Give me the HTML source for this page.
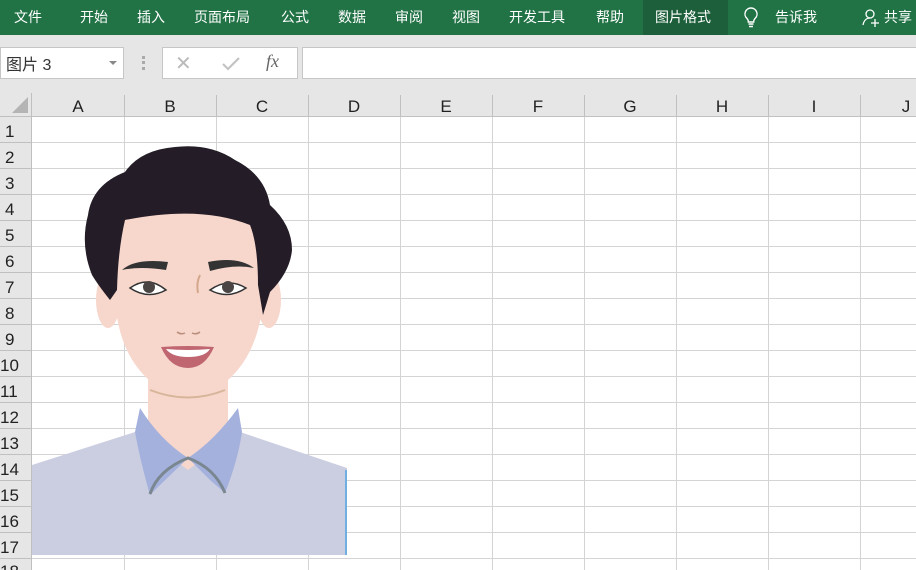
<!DOCTYPE html>
<html><head><meta charset="utf-8"><style>
*{margin:0;padding:0;box-sizing:border-box}
body{width:916px;height:570px;overflow:hidden;background:#fff;font-family:"Liberation Sans","Noto Sans CJK SC",sans-serif;position:relative}
.rib{position:absolute;left:0;top:0;width:916px;height:35px;background:#217346;color:#fff;font-size:14px}
.rib span{position:absolute;top:7px}
.act{position:absolute;left:643px;top:0;width:85px;height:35px;background:#1d5f3a}
.band{position:absolute;left:0;top:35px;width:916px;height:58px;background:#e6e6e6}
.nb{position:absolute;left:0;top:47px;width:124px;height:32px;background:#fff;border:1px solid #c6c6c6;font-size:16px;color:#333;padding:3px 5px}
.fb1{position:absolute;left:162px;top:47px;width:136px;height:32px;background:#fff;border:1px solid #c6c6c6}
.fb2{position:absolute;left:302px;top:47px;width:620px;height:32px;background:#fff;border:1px solid #c6c6c6}
</style></head><body>
<div class="rib"><div class="act"></div>
<span style="left:14px">文件</span><span style="left:80px">开始</span><span style="left:137px">插入</span><span style="left:194px">页面布局</span><span style="left:281px">公式</span><span style="left:338px">数据</span><span style="left:395px">审阅</span><span style="left:452px">视图</span><span style="left:509px">开发工具</span><span style="left:596px">帮助</span><span style="left:655px">图片格式</span><span style="left:775px">告诉我</span><span style="left:884px">共享</span>
<svg style="position:absolute;left:742px;top:6px" width="18" height="22"><path d="M9 2a6 6 0 0 0-4 10.5c1 1 1.3 2 1.3 3.5h5.4c0-1.5.3-2.5 1.3-3.5A6 6 0 0 0 9 2zM6.5 18h5M7 20.5h4" stroke="#fff" stroke-width="1.4" fill="none"/></svg>
<svg style="position:absolute;left:862px;top:8px" width="20" height="20"><circle cx="8" cy="6" r="4" stroke="#fff" fill="none" stroke-width="1.3"/><path d="M1 17c1-5 4-7 7-7M13 11v8M9 15h8" stroke="#fff" fill="none" stroke-width="1.3"/></svg>
</div>
<div class="band"></div>
<div class="nb">图片 3<span style="position:absolute;right:6px;top:13px;border:4px solid transparent;border-top:4px solid #888"></span></div>
<div style="position:absolute;left:142px;top:56px;width:3px;height:14px;border-left:3px dotted #aaa"></div>
<div class="fb1"><span style="position:absolute;left:12px;top:3px;font-size:20px;color:#bbb">✕</span>
<svg style="position:absolute;left:58px;top:8px" width="20" height="16"><path d="M2 8L7 13L18 2" stroke="#c4c4c4" stroke-width="2.2" fill="none"/></svg>
<span style="position:absolute;left:103px;top:3px;font-size:18px;font-style:italic;font-family:'Liberation Serif',serif;color:#666">fx</span></div>
<div class="fb2"></div>
<svg style="position:absolute;left:0;top:93px" width="916" height="477">
<rect x="0" y="0" width="916" height="24" fill="#e6e6e6"/>
<rect x="0" y="0" width="32" height="477" fill="#e6e6e6"/>
<path d="M28 4L28 20L12 20Z" fill="#b4b4b4"/>
<g stroke="#d4d4d4" stroke-width="1">
<path d="M124.5 24V477M216.5 24V477M308.5 24V477M400.5 24V477M492.5 24V477M584.5 24V477M676.5 24V477M768.5 24V477M860.5 24V477"/>
<path d="M32 49.5H916M32 75.5H916M32 101.5H916M32 127.5H916M32 153.5H916M32 179.5H916M32 205.5H916M32 231.5H916M32 257.5H916M32 283.5H916M32 309.5H916M32 335.5H916M32 361.5H916M32 387.5H916M32 413.5H916M32 439.5H916M32 465.5H916"/>
</g>
<g stroke="#c0c0c0"><path d="M0 23.5H916M31.5 0V477"/>
<path d="M124.5 2V24M216.5 2V24M308.5 2V24M400.5 2V24M492.5 2V24M584.5 2V24M676.5 2V24M768.5 2V24M860.5 2V24"/>
<path d="M0 49.5H32M0 75.5H32M0 101.5H32M0 127.5H32M0 153.5H32M0 179.5H32M0 205.5H32M0 231.5H32M0 257.5H32M0 283.5H32M0 309.5H32M0 335.5H32M0 361.5H32M0 387.5H32M0 413.5H32M0 439.5H32M0 465.5H32"/></g>
<g font-size="17" fill="#222" text-anchor="middle" font-family="Liberation Sans,sans-serif">
<text x="78" y="19">A</text><text x="170" y="19">B</text><text x="262" y="19">C</text><text x="354" y="19">D</text><text x="446" y="19">E</text><text x="538" y="19">F</text><text x="630" y="19">G</text><text x="722" y="19">H</text><text x="814" y="19">I</text><text x="906" y="19">J</text>
</g>
<g font-size="17" fill="#222" font-family="Liberation Sans,sans-serif">
<text x="5" y="44">1</text><text x="5" y="70">2</text><text x="5" y="96">3</text><text x="5" y="122">4</text><text x="5" y="148">5</text><text x="5" y="174">6</text><text x="5" y="200">7</text><text x="5" y="226">8</text><text x="5" y="252">9</text><text x="0" y="278">10</text><text x="0" y="304">11</text><text x="0" y="330">12</text><text x="0" y="356">13</text><text x="0" y="382">14</text><text x="0" y="408">15</text><text x="0" y="434">16</text><text x="0" y="460">17</text><text x="0" y="484">18</text>
</g>
</svg>
<svg style="position:absolute;left:0;top:0" width="916" height="570">
<path d="M32 465L135 432L185 465L240 432L347 468V555H32Z" fill="#cbcee0"/>
<path d="M346 470V555" stroke="#6fb0e0" stroke-width="2"/>
<path d="M148 375H228V440L188 470L148 440Z" fill="#f7d6cc"/>
<ellipse cx="108" cy="300" rx="12" ry="28" fill="#f7d6cc"/>
<ellipse cx="269" cy="300" rx="12" ry="28" fill="#f7d6cc"/>
<path d="M117 220Q188 200 260 220L262 310Q255 360 222 385Q190 403 155 385Q122 360 116 310Z" fill="#f7d6cc"/>
<path d="M150 390Q188 405 225 390" stroke="#d7b59a" stroke-width="2" fill="none"/>
<path d="M140 408Q160 440 188 458L160 485L150 495Q140 460 135 432Z" fill="#a4b1dd"/>
<path d="M238 408Q215 440 188 458L210 480L225 493Q238 460 242 432Z" fill="#a4b1dd"/>
<path d="M150 494Q158 470 188 458Q215 468 225 493" stroke="#7a8790" stroke-width="3" fill="none"/>
<path d="M92 275Q80 245 88 215Q92 185 125 172Q140 150 175 147Q210 143 235 160Q265 175 270 205Q292 225 292 250Q290 272 270 292L263 315L258 285Q258 245 250 225Q200 205 125 220Q118 250 117 290L110 300Q98 285 92 275Z" fill="#241d27"/>
<path d="M122 270Q135 258 168 262L166 270Q140 266 122 270Z" fill="#333"/>
<path d="M208 262Q238 256 254 268Q235 264 210 271Z" fill="#333"/>
<path d="M200 275Q196 283 198 293" stroke="#d4a88c" stroke-width="2" fill="none"/>
<path d="M130 288Q148 275 166 290Q148 300 130 288Z" fill="#fff" stroke="#333" stroke-width="1.5"/>
<circle cx="149" cy="287" r="6" fill="#4a4444"/>
<path d="M210 290Q228 277 246 288Q228 300 210 290Z" fill="#fff" stroke="#333" stroke-width="1.5"/>
<circle cx="228" cy="287" r="6" fill="#4a4444"/>
<path d="M177 332Q181 335 185 333M192 333Q196 335 200 332" stroke="#b98c7c" stroke-width="1.5" fill="none"/>
<path d="M161 347Q188 345 214 347Q205 368 188 368Q170 368 161 347Z" fill="#c06670"/>
<path d="M166 349Q188 351 210 349Q205 357 188 357Q172 357 166 349Z" fill="#fff"/>
</svg>
</body></html>
